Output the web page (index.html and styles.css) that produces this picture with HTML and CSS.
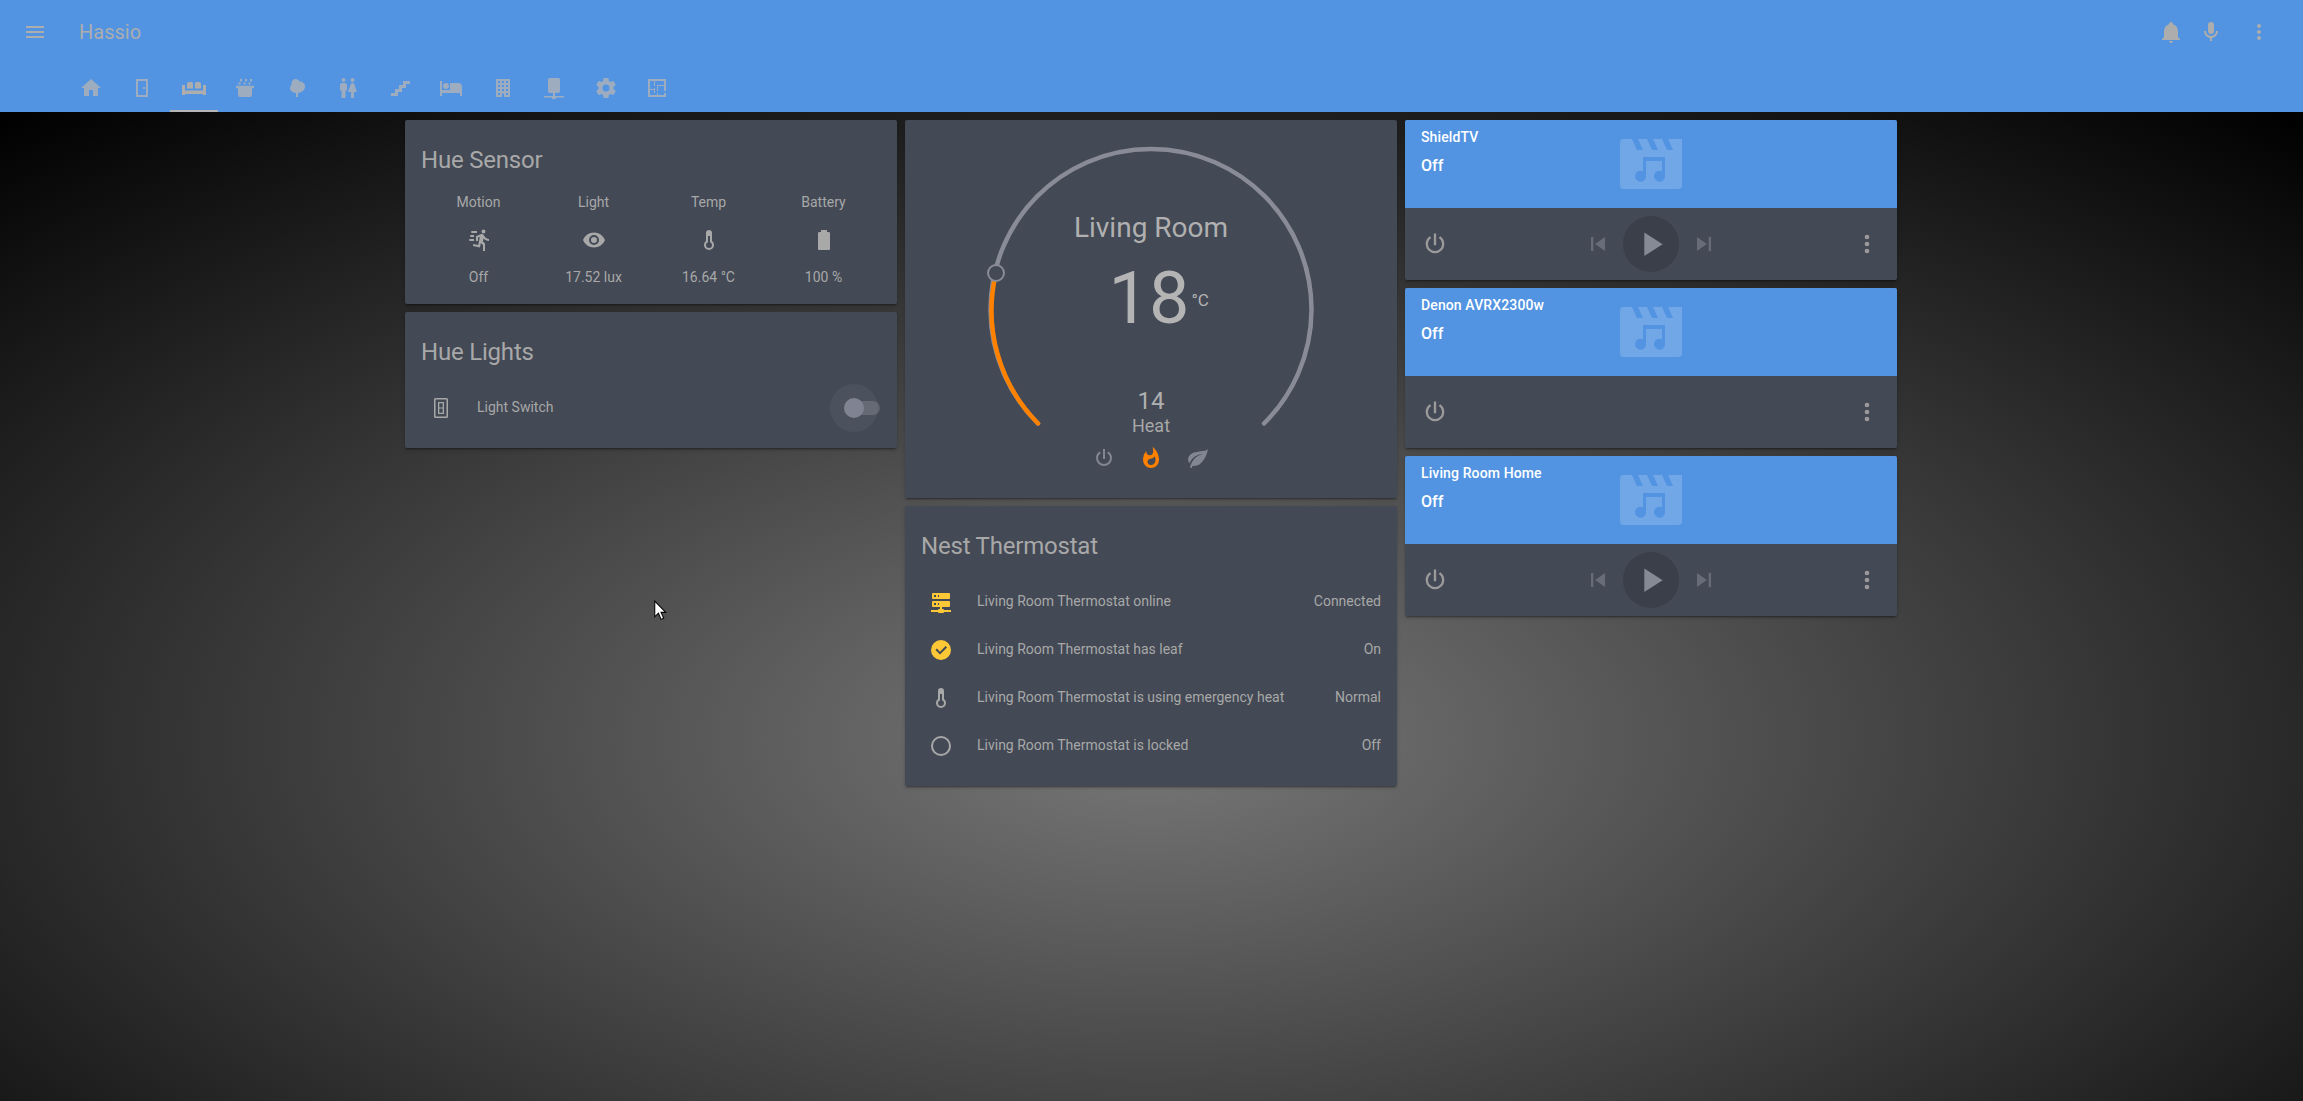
FILE: index.html
```html
<!DOCTYPE html>
<html lang="en">
<head>
  <meta charset="UTF-8">
  <meta name="viewport" content="width=device-width, initial-scale=1">
  <title>Hassio</title>
  <link rel="stylesheet" href="styles.css">
</head>

<body>

  <header class="app-header">
    <div class="toolbar">
      <svg class="icon menu-icon" viewBox="0 0 24 24"><path d="M3,6H21V8H3V6M3,11H21V13H3V11M3,16H21V18H3V16Z"/></svg>
      <div class="app-title">Hassio</div>
      <svg class="icon bell-icon" viewBox="0 0 24 24"><path d="M21,19V20H3V19L5,17V11C5,7.9 7.03,5.17 10,4.29C10,4.19 10,4.1 10,4A2,2 0 0,1 12,2A2,2 0 0,1 14,4C14,4.1 14,4.19 14,4.29C16.97,5.17 19,7.9 19,11V17L21,19M14,21A2,2 0 0,1 12,23A2,2 0 0,1 10,21"/></svg>
      <svg class="icon mic-icon" viewBox="0 0 24 24"><path d="M12,2A3,3 0 0,1 15,5V11A3,3 0 0,1 12,14A3,3 0 0,1 9,11V5A3,3 0 0,1 12,2M19,11C19,14.53 16.39,17.44 13,17.93V21H11V17.93C7.61,17.44 5,14.53 5,11H7A5,5 0 0,0 12,16A5,5 0 0,0 17,11H19Z"/></svg>
      <svg class="icon more-icon" viewBox="0 0 24 24"><path d="M12,16A2,2 0 0,1 14,18A2,2 0 0,1 12,20A2,2 0 0,1 10,18A2,2 0 0,1 12,16M12,10A2,2 0 0,1 14,12A2,2 0 0,1 12,14A2,2 0 0,1 10,12A2,2 0 0,1 12,10M12,4A2,2 0 0,1 14,6A2,2 0 0,1 12,8A2,2 0 0,1 10,6A2,2 0 0,1 12,4Z"/></svg>
    </div>
    <nav class="tabs">
      <div class="tab"><svg class="icon" viewBox="0 0 24 24"><path d="M10,20V14H14V20H19V12H22L12,3L2,12H5V20H10Z"/></svg></div>
      <div class="tab"><svg class="icon" viewBox="0 0 24 24"><path d="M6,3H18V21H6V3M8,5V19H16V5H8M13,11H15V13H13V11Z"/></svg></div>
      <div class="tab active"><svg class="icon" viewBox="0 0 24 24"><path d="M0,9H3V14.5H21V9H24V19H21V18H3V19H0V9ZM7,6H9.5A1.5,1.5 0 0 1 11,7.5V12.5H5V8A2,2 0 0 1 7,6ZM14.5,6H17A2,2 0 0 1 19,8V12.5H13V7.5A1.5,1.5 0 0 1 14.5,6Z"/></svg></div>
      <div class="tab"><svg class="icon" viewBox="0 0 24 24"><path d="M3,9.7H21V12.3H19V19A2,2 0 0,1 17,21H7A2,2 0 0,1 5,19V12.3H3ZM7,3H9V5.5H7ZM12,3H14V5.5H12ZM17,3H19V5.5H17ZM5.5,6.5H7.5V8.5H5.5ZM10.5,6.5H12.5V8.5H10.5ZM15.5,6.5H17.5V8.5H15.5Z"/></svg></div>
      <div class="tab"><svg class="icon" viewBox="0 0 24 24"><path d="M11,21V16.9C7.5,16.8 5,15 5,12C5,10.5 5.8,9.4 6.6,8.8C6.2,5.5 8,3 10.5,3C12.5,3 14,4.2 14.5,5.5C17.8,5.5 20,7.5 20,10.5C20,14 17,16.5 13,16.9V21H11Z"/></svg></div>
      <div class="tab"><svg class="icon" viewBox="0 0 24 24"><path d="M7.5,2A2,2 0 0,1 9.5,4A2,2 0 0,1 7.5,6A2,2 0 0,1 5.5,4A2,2 0 0,1 7.5,2M6,7H9A2,2 0 0,1 11,9V14.5H9.5V22H5.5V14.5H4V9A2,2 0 0,1 6,7M16.5,2A2,2 0 0,1 18.5,4A2,2 0 0,1 16.5,6A2,2 0 0,1 14.5,4A2,2 0 0,1 16.5,2M15,22V16H12L14.59,8.41C14.84,7.59 15.6,7 16.5,7C17.4,7 18.16,7.59 18.41,8.41L21,16H18V22H15Z"/></svg></div>
      <div class="tab"><svg class="icon" viewBox="0 0 24 24"><path d="M15,5V9H11V13H7V17H3V20H10V16H14V12H18V8H22V5H15Z"/></svg></div>
      <div class="tab"><svg class="icon" viewBox="0 0 24 24"><path d="M19,7H11V14H3V5H1V20H3V17H21V20H23V11A4,4 0 0,0 19,7M7,13A3,3 0 0,0 10,10A3,3 0 0,0 7,7A3,3 0 0,0 4,10A3,3 0 0,0 7,13Z"/></svg></div>
      <div class="tab"><svg class="icon" viewBox="0 0 24 24"><path d="M5,3V21H11V17.5H13V21H19V3H5M7,5H9V7H7V5M11,5H13V7H11V5M15,5H17V7H15V5M7,9H9V11H7V9M11,9H13V11H11V9M15,9H17V11H15V9M7,13H9V15H7V13M11,13H13V15H11V13M15,13H17V15H15V13M7,17H9V19H7V17M15,17H17V19H15V17Z"/></svg></div>
      <div class="tab"><svg class="icon" viewBox="0 0 24 24"><path d="M7.5,2H16.5A1.5,1.5 0 0,1 18,3.5V15A2,2 0 0,1 16,17H13V20H22V21.5H14V23H10V21.5H2V20H11V17H8A2,2 0 0,1 6,15V3.5A1.5,1.5 0 0,1 7.5,2Z"/></svg></div>
      <div class="tab"><svg class="icon" viewBox="0 0 24 24"><path d="M12,15.5A3.5,3.5 0 0,1 8.5,12A3.5,3.5 0 0,1 12,8.5A3.5,3.5 0 0,1 15.5,12A3.5,3.5 0 0,1 12,15.5M19.43,12.97C19.47,12.65 19.5,12.33 19.5,12C19.5,11.67 19.47,11.34 19.43,11L21.54,9.37C21.73,9.22 21.78,8.95 21.66,8.73L19.66,5.27C19.54,5.05 19.27,4.96 19.05,5.05L16.56,6.05C16.04,5.66 15.5,5.32 14.87,5.07L14.5,2.42C14.46,2.18 14.25,2 14,2H10C9.75,2 9.54,2.18 9.5,2.42L9.13,5.07C8.5,5.32 7.96,5.66 7.44,6.05L4.95,5.05C4.73,4.96 4.46,5.05 4.34,5.27L2.34,8.73C2.21,8.95 2.27,9.22 2.46,9.37L4.57,11C4.53,11.34 4.5,11.67 4.5,12C4.5,12.33 4.53,12.65 4.57,12.97L2.46,14.63C2.27,14.78 2.21,15.05 2.34,15.27L4.34,18.73C4.46,18.95 4.73,19.03 4.95,18.95L7.44,17.94C7.96,18.34 8.5,18.68 9.13,18.93L9.5,21.58C9.54,21.82 9.75,22 10,22H14C14.25,22 14.46,21.82 14.5,21.58L14.87,18.93C15.5,18.67 16.04,18.34 16.56,17.94L19.05,18.95C19.27,19.03 19.54,18.95 19.66,18.73L21.66,15.27C21.78,15.05 21.73,14.78 21.54,14.63L19.43,12.97Z"/></svg></div>
      <div class="tab"><svg class="icon" viewBox="0 0 24 24"><path d="M10,5V10H9V5H5V13H9V12H10V17H9V14H5V19H12V17H13V19H19V17H21V21H3V3H21V15H19V10H13V15H12V9H19V5H10Z"/></svg></div>
    </nav>
  </header>

  <main class="columns">
    <div class="column">
      <section class="card">
        <h2 class="card-title">Hue Sensor</h2>
        <div class="glance">
          <div class="glance-item">
            <div>Motion</div>
            <svg class="icon" viewBox="0 0 24 24"><path d="M16.5,5.5A2,2 0 0,0 18.5,3.5A2,2 0 0,0 16.5,1.5A2,2 0 0,0 14.5,3.5A2,2 0 0,0 16.5,5.5M12.9,19.4L13.9,15L16,17V23H18V15.5L15.9,13.5L16.5,10.5C17.89,12.09 19.89,13 22,13V11C20.24,11.03 18.6,10.11 17.7,8.6L16.7,7C16.34,6.4 15.7,6 15,6C14.7,6 14.5,6.1 14.2,6.1L9,8.3V13H11V9.6L12.8,8.9L11.2,17L6.3,16L5.9,18L12.9,19.4M4,9A1,1 0 0,1 3,8A1,1 0 0,1 4,7H7V9H4M5,5A1,1 0 0,1 4,4A1,1 0 0,1 5,3H10V5H5M3,13A1,1 0 0,1 2,12A1,1 0 0,1 3,11H7V13H3Z"/></svg>
            <div>Off</div>
          </div>
          <div class="glance-item">
            <div>Light</div>
            <svg class="icon" viewBox="0 0 24 24"><path d="M12,9A3,3 0 0,0 9,12A3,3 0 0,0 12,15A3,3 0 0,0 15,12A3,3 0 0,0 12,9M12,17A5,5 0 0,1 7,12A5,5 0 0,1 12,7A5,5 0 0,1 17,12A5,5 0 0,1 12,17M12,4.5C7,4.5 2.73,7.61 1,12C2.73,16.39 7,19.5 12,19.5C17,19.5 21.27,16.39 23,12C21.27,7.61 17,4.5 12,4.5Z"/></svg>
            <div>17.52 lux</div>
          </div>
          <div class="glance-item">
            <div>Temp</div>
            <svg class="icon" viewBox="0 0 24 24"><path d="M17,17A5,5 0 0,1 12,22A5,5 0 0,1 7,17C7,15.36 7.79,13.91 9,13V5A3,3 0 0,1 12,2A3,3 0 0,1 15,5V13C16.21,13.91 17,15.36 17,17M11,8V14.17C9.83,14.58 9,15.69 9,17A3,3 0 0,0 12,20A3,3 0 0,0 15,17C15,15.69 14.17,14.58 13,14.17V8H11Z"/></svg>
            <div>16.64 °C</div>
          </div>
          <div class="glance-item">
            <div>Battery</div>
            <svg class="icon" viewBox="0 0 24 24"><path d="M16.67,4H15V2H9V4H7.33A1.33,1.33 0 0,0 6,5.33V20.67C6,21.4 6.6,22 7.33,22H16.67A1.33,1.33 0 0,0 18,20.67V5.33C18,4.6 17.4,4 16.67,4Z"/></svg>
            <div>100 %</div>
          </div>
        </div>
      </section>

      <section class="card">
        <h2 class="card-title">Hue Lights</h2>
        <div class="rows">
          <div class="row">
            <div class="row-icon"><svg class="icon" viewBox="0 0 24 24"><path fill-rule="evenodd" d="M6.5,2H17.5A1.5,1.5 0 0,1 19,3.5V20.5A1.5,1.5 0 0,1 17.5,22H6.5A1.5,1.5 0 0,1 5,20.5V3.5A1.5,1.5 0 0,1 6.5,2M6.5,3.5V20.5H17.5V3.5H6.5M9,6H15V18H9V6M10.3,7.3V11.4H13.7V7.3H10.3M10.3,12.6V16.7H13.7V12.6H10.3Z"/></svg></div>
            <div class="row-name">Light Switch</div>
            <div class="toggle"><span class="toggle-track"></span><span class="toggle-halo"></span><span class="toggle-thumb"></span></div>
          </div>
        </div>
      </section>
    </div>

    <div class="column">
      <section class="card thermostat">
        <svg class="gauge" viewBox="0 0 492 378">
          <path class="gauge-track" d="M133,303.5A160.5,160.5 0 1 1 359,303.5"/>
          <path class="gauge-fill" d="M133,303.5A160.5,160.5 0 0 1 91,153"/>
          <circle class="gauge-handle" cx="91" cy="153" r="8"/>
        </svg>
        <div class="dial-name">Living Room</div>
        <div class="dial-temp">18<span class="dial-unit">°C</span></div>
        <div class="dial-set">14</div>
        <div class="dial-mode">Heat</div>
        <div class="dial-modes">
          <svg class="icon" viewBox="0 0 24 24"><path d="M16.56,5.44L15.11,6.89C16.84,7.94 18,9.83 18,12A6,6 0 0,1 12,18A6,6 0 0,1 6,12C6,9.83 7.16,7.94 8.88,6.88L7.44,5.44C5.36,6.88 4,9.28 4,12A8,8 0 0,0 12,20A8,8 0 0,0 20,12C20,9.28 18.64,6.88 16.56,5.44M13,3H11V13H13"/></svg>
          <svg class="icon mode-active" viewBox="0 0 24 24"><path d="M11.71,19C9.93,19 8.5,17.59 8.5,15.86C8.5,14.24 9.53,13.1 11.3,12.74C13.07,12.38 14.9,11.53 15.92,10.16C16.31,11.45 16.5,12.81 16.5,14.2C16.5,16.84 14.36,19 11.71,19M13.5,0.67C13.5,0.67 14.24,3.32 14.24,5.47C14.24,7.53 12.89,9.2 10.83,9.2C8.76,9.2 7.2,7.53 7.2,5.47L7.23,5.1C5.21,7.5 4,10.61 4,14A8,8 0 0,0 12,22A8,8 0 0,0 20,14C20,8.6 17.41,3.8 13.5,0.67Z"/></svg>
          <svg class="icon" viewBox="0 0 24 24"><path d="M17,8C8,10 5.9,16.17 3.82,21.34L5.71,22L6.66,19.7C7.14,19.87 7.64,20 8,20C19,20 22,3 22,3C21,5 14,5.25 9,6.25C4,7.25 2,11.5 2,13.5C2,15.5 3.75,17.25 3.75,17.25C7,8 17,8 17,8Z"/></svg>
        </div>
      </section>

      <section class="card">
        <h2 class="card-title">Nest Thermostat</h2>
        <div class="rows">
          <div class="row">
            <div class="row-icon"><svg class="icon icon-on" viewBox="0 0 24 24"><path d="M13,19H14A1,1 0 0,1 15,20H22V22H15A1,1 0 0,1 14,23H10A1,1 0 0,1 9,22H2V20H9A1,1 0 0,1 10,19H11V17H4A1,1 0 0,1 3,16V12A1,1 0 0,1 4,11H20A1,1 0 0,1 21,12V16A1,1 0 0,1 20,17H13V19M4,3H20A1,1 0 0,1 21,4V8A1,1 0 0,1 20,9H4A1,1 0 0,1 3,8V4A1,1 0 0,1 4,3M9,7H10V5H9V7M9,15H10V13H9V15M5,5V7H7V5H5M5,13V15H7V13H5Z"/></svg></div>
            <div class="row-name">Living Room Thermostat online</div>
            <div class="row-value">Connected</div>
          </div>
          <div class="row">
            <div class="row-icon"><svg class="icon icon-on" viewBox="0 0 24 24"><path d="M12,2A10,10 0 0,1 22,12A10,10 0 0,1 12,22A10,10 0 0,1 2,12A10,10 0 0,1 12,2M11,16.5L18,9.5L16.59,8.09L11,13.67L7.91,10.59L6.5,12L11,16.5Z"/></svg></div>
            <div class="row-name">Living Room Thermostat has leaf</div>
            <div class="row-value">On</div>
          </div>
          <div class="row">
            <div class="row-icon"><svg class="icon" viewBox="0 0 24 24"><path d="M17,17A5,5 0 0,1 12,22A5,5 0 0,1 7,17C7,15.36 7.79,13.91 9,13V5A3,3 0 0,1 12,2A3,3 0 0,1 15,5V13C16.21,13.91 17,15.36 17,17M11,8V14.17C9.83,14.58 9,15.69 9,17A3,3 0 0,0 12,20A3,3 0 0,0 15,17C15,15.69 14.17,14.58 13,14.17V8H11Z"/></svg></div>
            <div class="row-name">Living Room Thermostat is using emergency heat</div>
            <div class="row-value">Normal</div>
          </div>
          <div class="row">
            <div class="row-icon"><svg class="icon" viewBox="0 0 24 24"><path d="M12,20A8,8 0 0,1 4,12A8,8 0 0,1 12,4A8,8 0 0,1 20,12A8,8 0 0,1 12,20M12,2A10,10 0 0,0 2,12A10,10 0 0,0 12,22A10,10 0 0,0 22,12A10,10 0 0,0 12,2Z"/></svg></div>
            <div class="row-name">Living Room Thermostat is locked</div>
            <div class="row-value">Off</div>
          </div>
        </div>
      </section>
    </div>

    <div class="column">
      <section class="card media">
        <div class="media-top">
          <div class="media-name">ShieldTV</div>
          <div class="media-state">Off</div>
          <svg class="media-art" viewBox="0 0 62 50"><path fill-rule="evenodd" d="M4,0H12L17,11H23L18,0H27L32,11H38L33,0H42L47,11H53L48,0H62V46A4,4 0 0,1 58,50H4A4,4 0 0,1 0,46V4A4,4 0 0,1 4,0M23,18H45V37.2A5.5,5.5 0 1 1 42,32.3V22H26V37.2A5.5,5.5 0 1 1 23,32.3Z"/></svg>
        </div>
        <div class="media-bar">
          <svg class="icon" viewBox="0 0 24 24"><path d="M16.56,5.44L15.11,6.89C16.84,7.94 18,9.83 18,12A6,6 0 0,1 12,18A6,6 0 0,1 6,12C6,9.83 7.16,7.94 8.88,6.88L7.44,5.44C5.36,6.88 4,9.28 4,12A8,8 0 0,0 12,20A8,8 0 0,0 20,12C20,9.28 18.64,6.88 16.56,5.44M13,3H11V13H13"/></svg>
          <div class="transport">
            <svg class="skip-icon" viewBox="0 0 24 24"><path d="M6,18V6H8V18H6M9.5,12L18,6V18L9.5,12Z"/></svg>
            <div class="play-button"><svg viewBox="0 0 24 24"><path d="M8,5.14V19.14L19,12.14L8,5.14Z"/></svg></div>
            <svg class="skip-icon" viewBox="0 0 24 24"><path d="M16,18H18V6H16M6,18L14.5,12L6,6V18Z"/></svg>
          </div>
          <svg class="icon" viewBox="0 0 24 24"><path d="M12,16A2,2 0 0,1 14,18A2,2 0 0,1 12,20A2,2 0 0,1 10,18A2,2 0 0,1 12,16M12,10A2,2 0 0,1 14,12A2,2 0 0,1 12,14A2,2 0 0,1 10,12A2,2 0 0,1 12,10M12,4A2,2 0 0,1 14,6A2,2 0 0,1 12,8A2,2 0 0,1 10,6A2,2 0 0,1 12,4Z"/></svg>
        </div>
      </section>

      <section class="card media">
        <div class="media-top">
          <div class="media-name">Denon AVRX2300w</div>
          <div class="media-state">Off</div>
          <svg class="media-art" viewBox="0 0 62 50"><path fill-rule="evenodd" d="M4,0H12L17,11H23L18,0H27L32,11H38L33,0H42L47,11H53L48,0H62V46A4,4 0 0,1 58,50H4A4,4 0 0,1 0,46V4A4,4 0 0,1 4,0M23,18H45V37.2A5.5,5.5 0 1 1 42,32.3V22H26V37.2A5.5,5.5 0 1 1 23,32.3Z"/></svg>
        </div>
        <div class="media-bar">
          <svg class="icon" viewBox="0 0 24 24"><path d="M16.56,5.44L15.11,6.89C16.84,7.94 18,9.83 18,12A6,6 0 0,1 12,18A6,6 0 0,1 6,12C6,9.83 7.16,7.94 8.88,6.88L7.44,5.44C5.36,6.88 4,9.28 4,12A8,8 0 0,0 12,20A8,8 0 0,0 20,12C20,9.28 18.64,6.88 16.56,5.44M13,3H11V13H13"/></svg>
          <svg class="icon" viewBox="0 0 24 24"><path d="M12,16A2,2 0 0,1 14,18A2,2 0 0,1 12,20A2,2 0 0,1 10,18A2,2 0 0,1 12,16M12,10A2,2 0 0,1 14,12A2,2 0 0,1 12,14A2,2 0 0,1 10,12A2,2 0 0,1 12,10M12,4A2,2 0 0,1 14,6A2,2 0 0,1 12,8A2,2 0 0,1 10,6A2,2 0 0,1 12,4Z"/></svg>
        </div>
      </section>

      <section class="card media">
        <div class="media-top">
          <div class="media-name">Living Room Home</div>
          <div class="media-state">Off</div>
          <svg class="media-art" viewBox="0 0 62 50"><path fill-rule="evenodd" d="M4,0H12L17,11H23L18,0H27L32,11H38L33,0H42L47,11H53L48,0H62V46A4,4 0 0,1 58,50H4A4,4 0 0,1 0,46V4A4,4 0 0,1 4,0M23,18H45V37.2A5.5,5.5 0 1 1 42,32.3V22H26V37.2A5.5,5.5 0 1 1 23,32.3Z"/></svg>
        </div>
        <div class="media-bar">
          <svg class="icon" viewBox="0 0 24 24"><path d="M16.56,5.44L15.11,6.89C16.84,7.94 18,9.83 18,12A6,6 0 0,1 12,18A6,6 0 0,1 6,12C6,9.83 7.16,7.94 8.88,6.88L7.44,5.44C5.36,6.88 4,9.28 4,12A8,8 0 0,0 12,20A8,8 0 0,0 20,12C20,9.28 18.64,6.88 16.56,5.44M13,3H11V13H13"/></svg>
          <div class="transport">
            <svg class="skip-icon" viewBox="0 0 24 24"><path d="M6,18V6H8V18H6M9.5,12L18,6V18L9.5,12Z"/></svg>
            <div class="play-button"><svg viewBox="0 0 24 24"><path d="M8,5.14V19.14L19,12.14L8,5.14Z"/></svg></div>
            <svg class="skip-icon" viewBox="0 0 24 24"><path d="M16,18H18V6H16M6,18L14.5,12L6,6V18Z"/></svg>
          </div>
          <svg class="icon" viewBox="0 0 24 24"><path d="M12,16A2,2 0 0,1 14,18A2,2 0 0,1 12,20A2,2 0 0,1 10,18A2,2 0 0,1 12,16M12,10A2,2 0 0,1 14,12A2,2 0 0,1 12,14A2,2 0 0,1 10,12A2,2 0 0,1 12,10M12,4A2,2 0 0,1 14,6A2,2 0 0,1 12,8A2,2 0 0,1 10,6A2,2 0 0,1 12,4Z"/></svg>
        </div>
      </section>
    </div>
  </main>

  <svg class="cursor" viewBox="0 0 12 20"><path d="M1,1V16L4.5,12.6L7,18.5L9.5,17.4L7,11.8H11.5Z"/></svg>

</body>
</html>
```

FILE: styles.css
```css
* { margin: 0; padding: 0; box-sizing: border-box; }
html, body { height: 100%; }
body { font-family: Roboto, sans-serif; font-size: 14px; color: #a8a8a8; overflow: hidden; background: radial-gradient(ellipse 1732px 837px at 1151px 738px, #787878 0%, #000 100%) #000; }

.icon { width: 24px; height: 24px; fill: currentColor; display: block; flex: none; }

/* header */
.app-header { height: 112px; background: #5294e2; color: #adadad; }
.toolbar { height: 64px; display: flex; align-items: center; padding: 0 32px 0 23px; }
.app-title { font-size: 20px; margin-left: 32px; flex: 1; }
.toolbar .mic-icon { margin-left: 16px; }
.toolbar .more-icon { margin-left: 24px; }
.tabs { height: 48px; display: flex; padding-left: 65px; }
.tab { width: 51.5px; display: flex; align-items: center; justify-content: center; position: relative; color: #9eacc0; }
.tab.active { color: #adadad; }
.tab.active::after { content: ""; position: absolute; left: 2px; right: 2px; bottom: 0; height: 2px; background: #b5b5b5; }

/* columns */
.columns { display: flex; justify-content: center; gap: 8px; padding: 8px 1px 0 0; }
.column { width: 492px; display: flex; flex-direction: column; gap: 8px; }
.card { background: #434955; border-radius: 2px; box-shadow: 0 2px 2px rgba(0,0,0,.14), 0 1px 5px rgba(0,0,0,.12), 0 3px 1px -2px rgba(0,0,0,.2); overflow: hidden; }
.card-title { font-size: 24px; font-weight: 400; line-height: 32px; padding: 24px 16px 16px; color: #a8a8a8; letter-spacing: -.2px; }

/* glance */
.glance { display: grid; grid-template-columns: repeat(4, 1fr); padding: 0 16px 17px; text-align: center; line-height: 20px; }
.glance-item .icon { margin: 16px auto 15px; }

/* entity rows */
.rows { display: flex; flex-direction: column; gap: 8px; padding: 4px 16px 20px; }
.row { height: 40px; display: flex; align-items: center; }
.row-icon { width: 40px; display: flex; justify-content: center; margin-right: 16px; }
.row-name { flex: 1; padding-bottom: 2px; }
.row-value { padding-bottom: 2px; }
.icon-on { color: #fdc835; }

.toggle { width: 36px; height: 40px; position: relative; margin-right: 1px; }
.toggle-track { position: absolute; left: 0; right: 0; top: 13px; height: 14px; border-radius: 7px; background: #5d626e; }
.toggle-halo { position: absolute; left: -14px; top: -4px; width: 48px; height: 48px; border-radius: 50%; background: rgba(255,255,255,.05); }
.toggle-thumb { position: absolute; left: 0; top: 10px; width: 20px; height: 20px; border-radius: 50%; background: #7f8392; }

/* thermostat */
.thermostat { height: 378px; position: relative; display: flex; flex-direction: column; align-items: center; padding-top: 90px; }
.gauge { position: absolute; left: 0; top: 0; width: 492px; height: 378px; }
.gauge path { fill: none; stroke-width: 4.5px; stroke-linecap: round; }
.gauge-track { stroke: #898c97; }
.gauge-fill { stroke: #ff8100; }
.gauge-handle { fill: #434955; stroke: #898c97; stroke-width: 2px; }
.dial-name { font-size: 28px; line-height: 36px; color: #b0b0b0; position: relative; }
.dial-temp { font-size: 72px; font-weight: 400; line-height: 84px; margin: 11px 4px 0 0; color: #b4b4b4; position: relative; }
.dial-unit { font-size: 17px; position: absolute; left: calc(100% + 2px); top: 1px; }
.dial-set { font-size: 24px; line-height: 28px; margin-top: 46px; color: #b0b0b0; position: relative; }
.dial-mode { font-size: 18px; line-height: 22px; position: relative; }
.dial-modes { display: flex; gap: 23px; margin-top: 9px; color: #828692; position: relative; }
.mode-active { color: #ff8100; }

/* media player */
.media-top { height: 88px; background: #5294e2; color: #fff; padding: 7px 16px 0; position: relative; }
.media-name { font-weight: 500; line-height: 20px; letter-spacing: .12px; }
.media-state { font-size: 16px; font-weight: 500; line-height: 24px; margin-top: 7px; }
.media-art { position: absolute; left: 215px; top: 19px; width: 62px; height: 50px; fill: rgba(255,255,255,.18); }
.media-bar { height: 72px; display: flex; align-items: center; justify-content: space-between; padding: 0 16px; color: #9a9a9a; }
.media-bar > .icon { width: 28px; height: 28px; }
.transport { display: flex; align-items: center; gap: 11px; }
.skip-icon { width: 28px; height: 28px; fill: #676c78; }
.play-button { width: 56px; height: 56px; border-radius: 50%; background: #3a3f4a; display: flex; align-items: center; justify-content: center; }
.play-button svg { width: 40px; height: 40px; fill: #868a95; }

.cursor { position: absolute; left: 653px; top: 600px; width: 14px; height: 21px; fill: #fff; stroke: #000; stroke-width: 1px; }
```
